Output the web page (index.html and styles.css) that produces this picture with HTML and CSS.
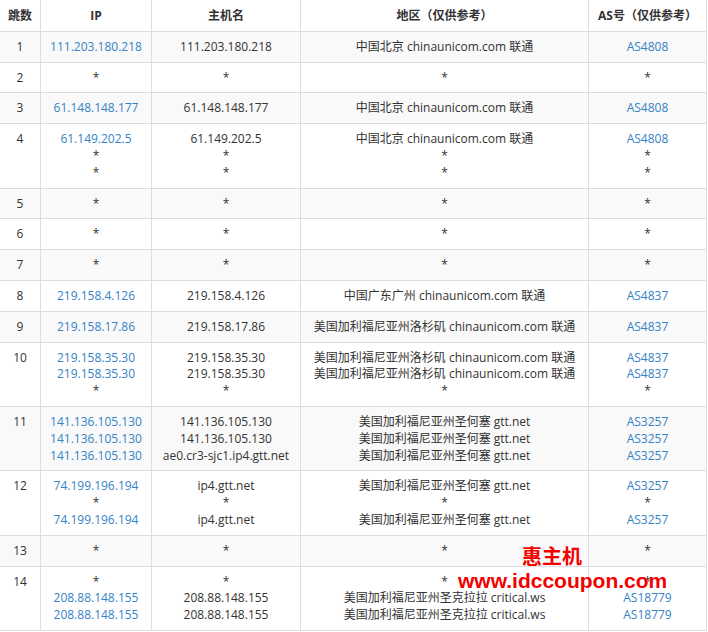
FILE: index.html
```html
<!DOCTYPE html>
<html lang="zh-CN">
<head>
<meta charset="utf-8">
<title>路由追踪</title>
<link rel="stylesheet" href="styles.css">
</head>
<body>
<div class="page">
<table class="trace">
  <colgroup>
    <col class="c-hop"><col class="c-ip"><col class="c-host"><col class="c-geo"><col class="c-as">
  </colgroup>
  <thead>
    <tr><th>跳数</th><th>IP</th><th>主机名</th><th>地区（仅供参考）</th><th>AS号（仅供参考）</th></tr>
  </thead>
  <tbody>
    <tr><td>1</td><td><a class="lk">111.203.180.218</a></td><td>111.203.180.218</td><td>中国北京 chinaunicom.com 联通</td><td><a class="lk">AS4808</a></td></tr>
    <tr><td>2</td><td>*</td><td>*</td><td>*</td><td>*</td></tr>
    <tr><td>3</td><td><a class="lk">61.148.148.177</a></td><td>61.148.148.177</td><td>中国北京 chinaunicom.com 联通</td><td><a class="lk">AS4808</a></td></tr>
    <tr><td>4</td><td><a class="lk">61.149.202.5</a><br>*<br>*</td><td>61.149.202.5<br>*<br>*</td><td>中国北京 chinaunicom.com 联通<br>*<br>*</td><td><a class="lk">AS4808</a><br>*<br>*</td></tr>
    <tr><td>5</td><td>*</td><td>*</td><td>*</td><td>*</td></tr>
    <tr><td>6</td><td>*</td><td>*</td><td>*</td><td>*</td></tr>
    <tr><td>7</td><td>*</td><td>*</td><td>*</td><td>*</td></tr>
    <tr><td>8</td><td><a class="lk">219.158.4.126</a></td><td>219.158.4.126</td><td>中国广东广州 chinaunicom.com 联通</td><td><a class="lk">AS4837</a></td></tr>
    <tr><td>9</td><td><a class="lk">219.158.17.86</a></td><td>219.158.17.86</td><td>美国加利福尼亚州洛杉矶 chinaunicom.com 联通</td><td><a class="lk">AS4837</a></td></tr>
    <tr><td>10</td><td><a class="lk">219.158.35.30</a><br><a class="lk">219.158.35.30</a><br>*</td><td>219.158.35.30<br>219.158.35.30<br>*</td><td>美国加利福尼亚州洛杉矶 chinaunicom.com 联通<br>美国加利福尼亚州洛杉矶 chinaunicom.com 联通<br>*</td><td><a class="lk">AS4837</a><br><a class="lk">AS4837</a><br>*</td></tr>
    <tr><td>11</td><td><a class="lk">141.136.105.130</a><br><a class="lk">141.136.105.130</a><br><a class="lk">141.136.105.130</a></td><td>141.136.105.130<br>141.136.105.130<br>ae0.cr3-sjc1.ip4.gtt.net</td><td>美国加利福尼亚州圣何塞 gtt.net<br>美国加利福尼亚州圣何塞 gtt.net<br>美国加利福尼亚州圣何塞 gtt.net</td><td><a class="lk">AS3257</a><br><a class="lk">AS3257</a><br><a class="lk">AS3257</a></td></tr>
    <tr><td>12</td><td><a class="lk">74.199.196.194</a><br>*<br><a class="lk">74.199.196.194</a></td><td>ip4.gtt.net<br>*<br>ip4.gtt.net</td><td>美国加利福尼亚州圣何塞 gtt.net<br>*<br>美国加利福尼亚州圣何塞 gtt.net</td><td><a class="lk">AS3257</a><br>*<br><a class="lk">AS3257</a></td></tr>
    <tr><td>13</td><td>*</td><td>*</td><td>*</td><td>*</td></tr>
    <tr><td>14</td><td>*<br><a class="lk">208.88.148.155</a><br><a class="lk">208.88.148.155</a></td><td>*<br>208.88.148.155<br>208.88.148.155</td><td>*<br>美国加利福尼亚州圣克拉拉 critical.ws<br>美国加利福尼亚州圣克拉拉 critical.ws</td><td>*<br><a class="lk">AS18779</a><br><a class="lk">AS18779</a></td></tr>
  </tbody>
</table>
<div class="wm">
  <span class="wm-name">惠主机</span>
  <span class="wm-url">www.idccoupon.com</span>
</div>
</div>
</body>
</html>
```
FILE: styles.css
```css
html, body {
  margin: 0;
  padding: 0;
  background: #fff;
}
.page {
  position: relative;
  width: 708px;
  height: 632px;
  overflow: hidden;
  font-family: "Open Sans", "Noto Sans CJK SC", sans-serif;
  font-size: 12px;
  line-height: 16.8px;
  color: #333;
}
.trace {
  border-collapse: collapse;
  table-layout: fixed;
  width: 708px;
  margin: -1px 0 0 -1px;
}
.c-hop { width: 41px; }
.c-ip { width: 111px; }
.c-host { width: 149px; }
.c-geo { width: 288px; }
.c-as { width: 118px; }
.trace th,
.trace td {
  border: 1px solid #ddd;
  padding: 7px 4px 6px;
  text-align: center;
  vertical-align: top;
  white-space: nowrap;
}
.trace th {
  padding-top: 8px;
  font-weight: bold;
  background: #fff;
}
.trace tbody tr:nth-child(odd) td {
  background: #f9f9f9;
}
.lk {
  color: #3582c6;
  text-decoration: none;
}
.wm {
  position: absolute;
  left: 458px;
  top: 543px;
  display: flex;
  flex-direction: column;
  color: #f30000;
  font-weight: bold;
}
.wm-name {
  margin-left: 64px;
  font-family: "Noto Sans CJK SC", sans-serif;
  font-size: 20px;
  line-height: 26px;
}
.wm-url {
  font-family: "Liberation Sans", sans-serif;
  font-size: 21px;
  line-height: 24px;
}
```
